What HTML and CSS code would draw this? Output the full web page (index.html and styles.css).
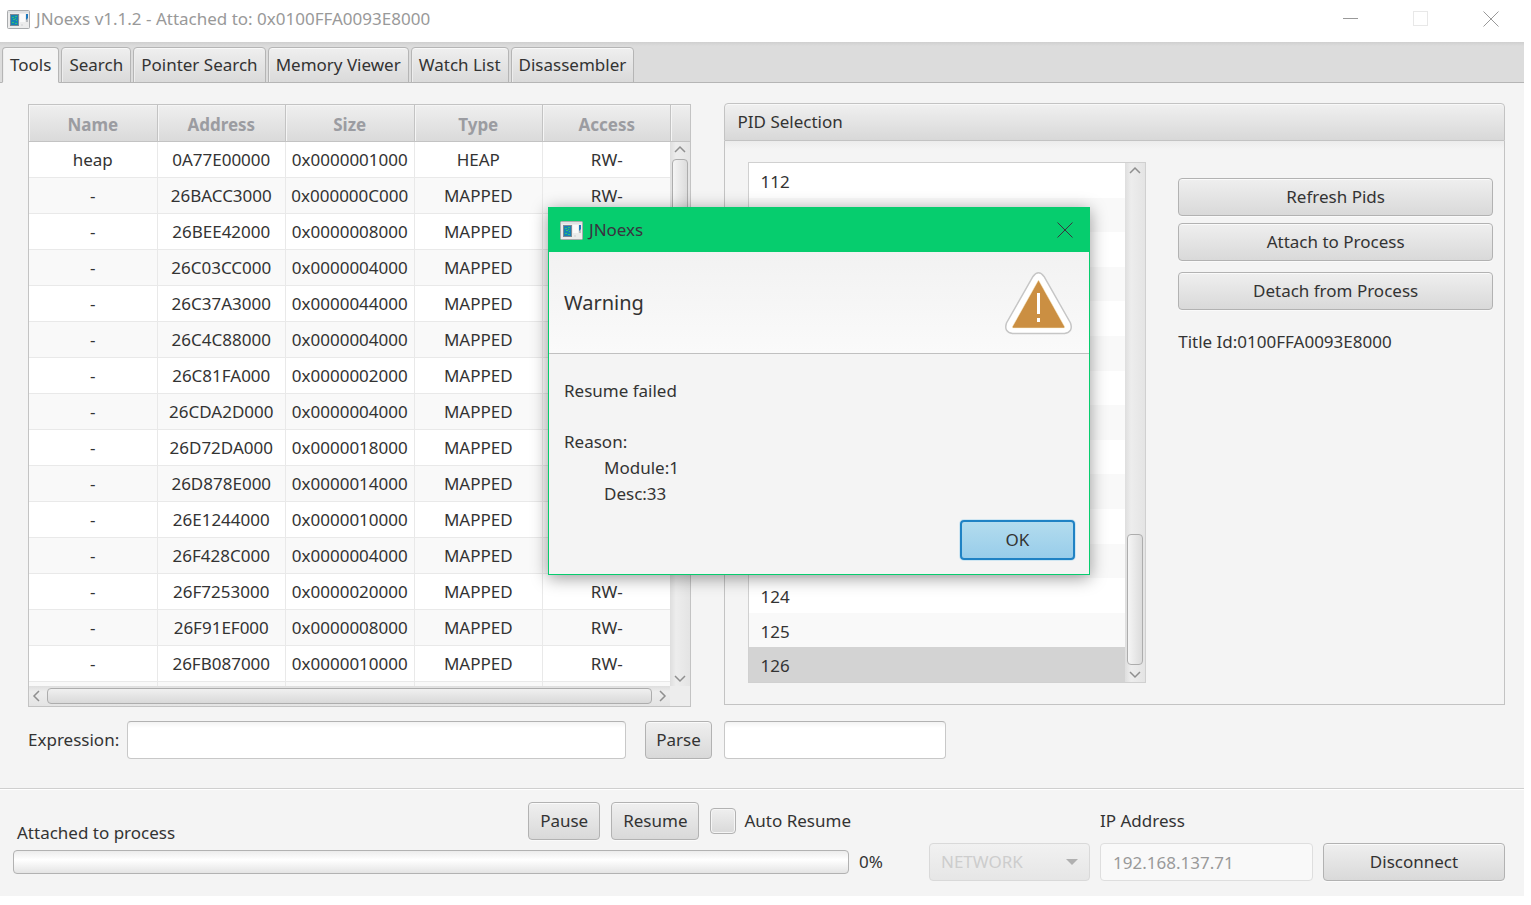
FILE: index.html
```html
<!DOCTYPE html>
<html lang="en">
<head>
  <meta charset="UTF-8" />
  <meta name="viewport" content="width=device-width, initial-scale=1.0" />
  <title>JNoexs v1.1.2</title>
  <link rel="stylesheet" href="styles.css">
</head>
<body>
  <!-- Shared icons -->
  <svg class="sprite" width="0" height="0" aria-hidden="true">
    <symbol id="app-icon" viewBox="0 0 23 19">
      <rect x="0.5" y="0.5" width="22" height="18" rx="1" fill="#ececec" stroke="#a9abad" />
      <rect x="1" y="1" width="21" height="2" fill="#dfe1e3" />
      <rect x="3" y="4" width="9" height="12" fill="#7d8894" />
      <rect x="4" y="5" width="7" height="10" fill="#1583b5" />
      <path d="M5 7.500h2M8 6.500h2M6 9.500h2M9 10.500h1M5 12.500h2M8 13.500h2M8 8.500h1" stroke="#35c46c" />
      <rect x="13" y="4" width="5" height="8" fill="#fafafa" />
      <rect x="19" y="4" width="2" height="8" fill="#b9bcc0" />
      <path d="M19 4h2v4l-2 2z" fill="#1c78bd" />
      <circle cx="15" cy="15" r="1" fill="#d9dadb" />
    </symbol>
    <symbol id="close" viewBox="0 0 16 16">
      <path d="M0.5 0.5l15 15M15.5 0.5l-15 15" fill="none" stroke="currentColor" />
    </symbol>
    <symbol id="arrow-up" viewBox="0 0 12 8">
      <path d="M1 7l5-5 5 5" fill="none" stroke="#8f8f8f" stroke-width="1.5" />
    </symbol>
    <symbol id="arrow-down" viewBox="0 0 12 8">
      <path d="M1 1l5 5 5-5" fill="none" stroke="#8f8f8f" stroke-width="1.5" />
    </symbol>
    <symbol id="arrow-left" viewBox="0 0 8 12">
      <path d="M7 1L2 6l5 5" fill="none" stroke="#8f8f8f" stroke-width="1.5" />
    </symbol>
    <symbol id="arrow-right" viewBox="0 0 8 12">
      <path d="M1 1l5 5-5 5" fill="none" stroke="#8f8f8f" stroke-width="1.5" />
    </symbol>
  </svg>

  <div class="window">
    <header class="title-bar">
      <svg class="app-icon"><use href="#app-icon" /></svg>
      <span class="title">JNoexs v1.1.2 - Attached to: 0x0100FFA0093E8000</span>
      <button class="win-btn" aria-label="Minimize"><svg width="16" height="16"><path d="M0 7.5h15" stroke="currentColor" /></svg></button>
      <button class="win-btn" aria-label="Maximize" disabled><svg width="16" height="16"><rect x="0.5" y="0.5" width="14" height="14" fill="none" stroke="currentColor" /></svg></button>
      <button class="win-btn" aria-label="Close"><svg width="16" height="16"><use href="#close" /></svg></button>
    </header>

    <nav class="tabs" role="tablist">
      <button class="tab selected" role="tab" aria-selected="true">Tools</button>
      <button class="tab" role="tab">Search</button>
      <button class="tab" role="tab">Pointer Search</button>
      <button class="tab" role="tab">Memory Viewer</button>
      <button class="tab" role="tab">Watch List</button>
      <button class="tab" role="tab">Disassembler</button>
    </nav>

    <main class="content">
      <div class="panels">
        <!-- Memory regions -->
        <section class="table-view">
          <div class="viewport">
            <table>
              <thead>
                <tr><th>Name</th><th>Address</th><th>Size</th><th>Type</th><th>Access</th></tr>
              </thead>
              <tbody id="regions"></tbody>
            </table>
          </div>
          <div class="side">
            <div class="filler"></div>
            <div class="scrollbar">
              <svg width="12" height="8"><use href="#arrow-up" /></svg>
              <div class="track"><div class="thumb"></div></div>
              <svg width="12" height="8"><use href="#arrow-down" /></svg>
            </div>
          </div>
          <div class="scrollbar horizontal">
            <svg width="8" height="12"><use href="#arrow-left" /></svg>
            <div class="track"><div class="thumb full"></div></div>
            <svg width="8" height="12"><use href="#arrow-right" /></svg>
          </div>
          <div class="corner"></div>
        </section>

        <!-- Process list -->
        <section class="titled-pane">
          <h2>PID Selection</h2>
          <div class="pane-body">
            <div class="list-view">
              <ul id="pids"></ul>
              <div class="scrollbar">
                <svg width="12" height="8"><use href="#arrow-up" /></svg>
                <div class="track at-end"><div class="thumb short"></div></div>
                <svg width="12" height="8"><use href="#arrow-down" /></svg>
              </div>
            </div>
            <div class="pid-actions">
              <button class="btn">Refresh Pids</button>
              <button class="btn">Attach to Process</button>
              <button class="btn detach">Detach from Process</button>
              <p>Title Id:0100FFA0093E8000</p>
            </div>
          </div>
        </section>
      </div>

      <div class="expression">
        <label for="expr">Expression:</label>
        <input type="text" class="field" id="expr" />
        <button class="btn parse">Parse</button>
        <input type="text" class="field" aria-label="Result" />
      </div>
    </main>

    <footer class="footer">
      <div class="status-row">
        <span class="status" id="status">Attached to process</span>
        <button class="btn">Pause</button>
        <button class="btn">Resume</button>
        <label class="check"><input type="checkbox" />Auto Resume</label>
      </div>
      <label class="ip-label" for="ip">IP Address</label>
      <div class="progress" role="progressbar" aria-labelledby="status" aria-valuenow="0"></div>
      <span>0%</span>
      <div class="combo">
        <select aria-label="Connection" disabled><option>NETWORK</option></select>
      </div>
      <input type="text" class="field" id="ip" value="192.168.137.71" disabled />
      <button class="btn">Disconnect</button>
    </footer>
  </div>

  <div class="dialog" role="alertdialog" aria-labelledby="dialogTitle">
    <div class="dialog-bar">
      <svg class="app-icon"><use href="#app-icon" /></svg>
      <span id="dialogTitle">JNoexs</span>
      <button class="dialog-close" aria-label="Close"><svg width="16" height="16"><use href="#close" /></svg></button>
    </div>
    <div class="dialog-header">
      <span>Warning</span>
      <svg width="68" height="64" viewBox="0 0 68 64">
        <path d="M28 5.500Q33.500-2 39 5.500L65.500 52Q68.500 61 59.500 62.500H7.500Q-1.500 61 1.500 52Z" fill="#fff" stroke="#c6c6c6" stroke-width="1.500" />
        <path d="M33.500 9L7.500 55.500V57H59.500V55.500Z" fill="#cb8f42" stroke="#fbf0d0" stroke-width="0.500" />
        <path d="M32 22h3v21h-3zM32 47h3v4h-3z" fill="#fff" />
      </svg>
    </div>
    <div class="dialog-content">
      <p>Resume failed</p>
      <p class="reason">Reason:</p>
      <p class="indent">Module:1</p>
      <p class="indent">Desc:33</p>
    </div>
    <div class="dialog-buttons">
      <button class="btn default">OK</button>
    </div>
  </div>

  <script>
    const regions = [
      ["heap", "0A77E00000", "0x0000001000", "HEAP"],
      ["-", "26BACC3000", "0x000000C000", "MAPPED"],
      ["-", "26BEE42000", "0x0000008000", "MAPPED"],
      ["-", "26C03CC000", "0x0000004000", "MAPPED"],
      ["-", "26C37A3000", "0x0000044000", "MAPPED"],
      ["-", "26C4C88000", "0x0000004000", "MAPPED"],
      ["-", "26C81FA000", "0x0000002000", "MAPPED"],
      ["-", "26CDA2D000", "0x0000004000", "MAPPED"],
      ["-", "26D72DA000", "0x0000018000", "MAPPED"],
      ["-", "26D878E000", "0x0000014000", "MAPPED"],
      ["-", "26E1244000", "0x0000010000", "MAPPED"],
      ["-", "26F428C000", "0x0000004000", "MAPPED"],
      ["-", "26F7253000", "0x0000020000", "MAPPED"],
      ["-", "26F91EF000", "0x0000008000", "MAPPED"],
      ["-", "26FB087000", "0x0000010000", "MAPPED"],
      ["", "", "", ""]
    ];

    // Fill the memory table
    document.getElementById("regions").innerHTML = regions
      .map(r => `<tr>${r.map(c => `<td>${c}</td>`).join("")}<td>${r[0] ? "RW-" : ""}</td></tr>`)
      .join("");

    // Fill the pid list, the last one is selected
    const pids = document.getElementById("pids");
    for (let pid = 112; pid <= 126; pid++) {
      const li = document.createElement("li");
      li.textContent = pid;
      if (pid === 126) li.className = "selected";
      pids.appendChild(li);
    }
  </script>
</body>
</html>
```
FILE: styles.css
```css
:root {
  --bg: #f4f4f4;
  --text: #333;
  --border: #c3c3c3;
  --outline: #b2b2b2;
  --green: #06cd6e;
  --button: linear-gradient(#efefef, #d9d9d9);
}

* {
  box-sizing: border-box;
}

body {
  margin: 0;
  height: 100vh;
  padding: 0 7px 9px 0;
  background: #fff;
  color: var(--text);
  font-family: "Noto Sans", "Open Sans", sans-serif;
  font-size: 17px;
  line-height: 24px;
}

button, input, select {
  font: inherit;
  color: inherit;
}

p, h2, ul {
  margin: 0;
  padding: 0;
}

.sprite {
  position: absolute;
}

.window {
  height: 100%;
  display: flex;
  flex-direction: column;
  background: var(--bg);
}

/* Title bar */
.title-bar {
  display: flex;
  align-items: center;
  gap: 4px;
  height: 42px;
  padding-left: 7px;
  padding-bottom: 4px;
  background: #fff;
  color: #999;
}

.app-icon {
  width: 23px;
  height: 19px;
}

.title {
  flex: 1;
  padding-left: 2px;
}

.win-btn {
  display: flex;
  justify-content: center;
  width: 66px;
  padding: 0;
  border: none;
  background: none;
}

.win-btn:disabled {
  color: #e8e8e8;
}

/* Tabs */
.tabs {
  display: flex;
  align-items: flex-end;
  gap: 2px;
  height: 41px;
  padding: 5px 2px 0;
  background: linear-gradient(#cfcfcf, #dcdcdc 4px);
  box-shadow: inset 0 -1px #b5b5b5;
}

.tab {
  height: 36px;
  padding: 0 7px;
  border: 1px solid #b5b5b5;
  border-radius: 4px 4px 0 0;
  background: linear-gradient(#efefef, #dadada);
  box-shadow: inset 0 1px #f8f8f8, inset 1px 0 #ededed;
}

.tab.selected {
  border-bottom-color: var(--bg);
  background: var(--bg);
}

/* Main area */
.content {
  flex: 1;
  min-height: 0;
  display: flex;
  flex-direction: column;
  gap: 14px;
  padding: 20px 19px 29px 28px;
  border-bottom: 1px solid #cfcfcf;
}

.panels {
  flex: 1;
  min-height: 0;
  display: grid;
  grid-template-columns: 663fr 782fr;
  grid-template-rows: minmax(0, 1fr);
  gap: 33px;
}

.table-view {
  display: grid;
  grid-template-columns: 1fr 20px;
  grid-template-rows: minmax(0, 1fr) 20px;
  margin-top: 1px;
  border: 1px solid var(--border);
}

.viewport {
  overflow: hidden;
}

table {
  width: calc(100% + 2px);
  table-layout: fixed;
  border-collapse: separate;
  border-spacing: 0;
  text-align: center;
}

th, td {
  height: 36px;
  padding: 0;
  border-right: 1px solid #e9e9e9;
  border-bottom: 1px solid #e9e9e9;
}

th, .filler {
  border-right: 1px solid var(--border);
  border-bottom: 1px solid var(--border);
  background: linear-gradient(#efefef, #dadada);
  box-shadow: inset 1px 1px #f5f5f5;
}

th {
  height: 37px;
  padding-top: 4px;
  color: #9b9ca1;
  font-weight: bold;
}

tbody tr {
  background: #fff;
}

tbody tr:nth-child(even) {
  background: #f9f9f9;
}

.side {
  display: flex;
  flex-direction: column;
}

.filler {
  height: 37px;
  border-right: none;
  border-left: 1px solid var(--border);
}

.corner {
  background: #ededed;
}

/* Scrollbars */
.scrollbar {
  flex: 1;
  display: flex;
  flex-direction: column;
  align-items: center;
  gap: 6px;
  padding: 3px 2px;
  background: linear-gradient(90deg, #dedede, #ededed 30%, #e4e4e4);
}

.track {
  flex: 1;
  align-self: stretch;
  display: flex;
  flex-direction: column;
}

.track.at-end {
  justify-content: flex-end;
}

.thumb {
  height: 38%;
  border: 1px solid #adadad;
  border-radius: 4px;
  background: linear-gradient(90deg, #f5f5f5, #dcdcdc);
}

.thumb.short {
  height: 27%;
}

.horizontal {
  flex-direction: row;
  gap: 7px;
  padding: 2px 3px;
  background: linear-gradient(#dedede, #ededed 30%, #e4e4e4);
}

.thumb.full {
  height: 100%;
  background: linear-gradient(#f0f0f0, #d9d9d9);
}

/* PID pane */
.titled-pane {
  display: flex;
  flex-direction: column;
  margin-bottom: 2px;
}

.titled-pane h2 {
  height: 38px;
  padding: 6px 13px;
  border: 1px solid var(--border);
  border-radius: 4px 4px 0 0;
  background: linear-gradient(#f0f0f0, #d8d8d8);
  box-shadow: inset 0 1px #f8f8f8;
  font-size: 17px;
  font-weight: normal;
}

.pane-body {
  flex: 1;
  min-height: 0;
  display: grid;
  grid-template-columns: 399fr 315fr;
  gap: 32px;
  padding: 21px 11px 21px 23px;
  border: 1px solid var(--border);
  border-top: none;
  background: linear-gradient(#ececec, var(--bg) 8px);
}

.list-view {
  display: flex;
  border: 1px solid #d0d0d0;
}

.list-view ul {
  flex: 1;
  display: flex;
  flex-direction: column;
  list-style: none;
}

.list-view .scrollbar {
  flex: 0 0 20px;
}

.list-view li {
  flex: 1;
  display: flex;
  align-items: center;
  padding: 3px 12px 0;
  background: #fff;
}

.list-view li:nth-child(even) {
  background: #f9f9f9;
}

.list-view li.selected {
  background: #d3d3d3;
}

.pid-actions {
  display: flex;
  flex-direction: column;
  gap: 7px;
  padding-top: 16px;
}

.detach {
  margin-top: 4px;
}

.pid-actions p {
  padding-top: 13px;
}

/* Controls */
.btn {
  height: 38px;
  padding: 0 11px;
  border: 1px solid var(--outline);
  border-radius: 4px;
  background: var(--button);
  box-shadow: inset 0 1px #fafafa, 0 1px #fafafa;
}

.field {
  width: 100%;
  min-width: 0;
  height: 38px;
  padding: 0 12px;
  border: 1px solid #c8c8c8;
  border-top-color: var(--outline);
  border-radius: 4px;
  background: linear-gradient(#f3f3f3, #fff 6px);
}

.field:disabled {
  border-color: #dedede;
  background: #f9f9f9;
  color: #999;
}

.expression {
  display: grid;
  grid-template-columns: 87px 499fr 74px 222fr 547fr;
  gap: 12px;
  align-items: center;
}

.parse {
  margin-left: 7px;
  padding: 0;
}

/* Footer */
.footer {
  display: grid;
  grid-template-columns: 1fr 60px 161px 213px 182px;
  gap: 3px 10px;
  align-items: center;
  padding: 12px 19px 15px 13px;
  border-top: 1px solid #fff;
}

.status-row {
  grid-column: 1 / 3;
  display: flex;
  align-items: center;
  gap: 11px;
  padding: 0 68px 0 4px;
}

.status {
  flex: 1;
  align-self: flex-end;
  line-height: 14px;
}

.check {
  display: flex;
  align-items: center;
  gap: 8px;
}

.check input {
  appearance: none;
  width: 26px;
  height: 26px;
  margin: 0;
  border: 1px solid var(--outline);
  border-radius: 4px;
  background: var(--button);
  box-shadow: inset 0 0 0 1px #f5f5f5;
}

.ip-label {
  grid-column: 4 / 6;
}

.progress {
  height: 24px;
  border: 1px solid var(--outline);
  border-radius: 4px;
  background: linear-gradient(#ececec, #fff 40%, #e4e4e4);
}

.combo {
  position: relative;
}

.combo select {
  appearance: none;
  width: 100%;
  height: 38px;
  padding: 0 11px;
  border: 1px solid #d9d9d9;
  border-radius: 4px;
  background: linear-gradient(#f1f1f1, #e6e6e6);
  color: #cdcdcd;
  opacity: 1;
}

/* drop-down arrow over the select */
.combo::after {
  content: "";
  position: absolute;
  right: 12px;
  top: 16px;
  border: 6px solid transparent;
  border-top-color: #b0b0b0;
  border-bottom: none;
}

/* Warning dialog */
.dialog {
  position: absolute;
  left: 548px;
  top: 207px;
  width: 542px;
  border: 1px solid var(--green);
  background: var(--bg);
  box-shadow: 0 3px 16px rgba(0, 0, 0, 0.4);
}

.dialog-bar {
  display: flex;
  align-items: center;
  gap: 6px;
  height: 44px;
  padding: 0 16px 0 11px;
  background: var(--green);
  color: #3a3340;
}

.dialog-close {
  display: flex;
  margin-left: auto;
  padding: 0;
  border: none;
  background: none;
}

.dialog-header {
  display: flex;
  align-items: center;
  justify-content: space-between;
  height: 102px;
  padding: 0 16px 0 15px;
  border-bottom: 1px solid #c0c0c0;
  background: linear-gradient(#f2f2f2, #fafafa);
  font-size: 20px;
}

.dialog-content {
  padding: 24px 15px 0;
  line-height: 26px;
}

.reason {
  margin-top: 25px;
}

.indent {
  padding-left: 40px;
}

.dialog-buttons {
  display: flex;
  justify-content: flex-end;
  padding: 13px 14px 14px;
}

.btn.default {
  width: 115px;
  height: 40px;
  border: 2px solid #1f82c4;
  background: linear-gradient(#b3dcee, #98cdea);
  box-shadow: 0 0 0 1px #cfe6f2;
}
```
